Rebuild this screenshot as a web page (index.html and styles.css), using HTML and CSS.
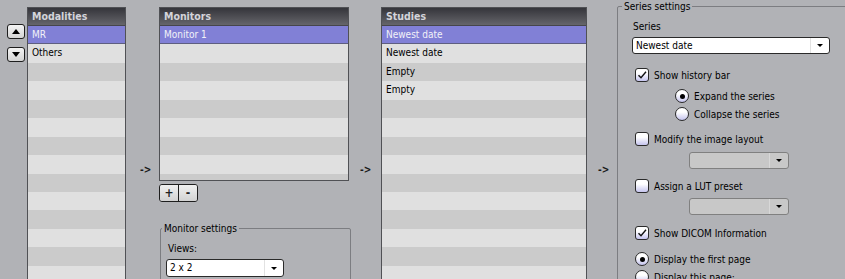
FILE: index.html
```html
<!doctype html>
<html lang="en">
<head>
<meta charset="utf-8">
<title>Hanging protocol</title>
<link rel="stylesheet" href="styles.css">
</head>
<body>
<div id="protocol">

  <div class="order-buttons">
    <button class="order-btn" type="button"><span class="tri-up"></span></button>
    <button class="order-btn" type="button"><span class="tri-down"></span></button>
  </div>

  <div class="list-panel modalities">
    <div class="list-header">Modalities</div>
    <ul class="list-rows">
      <li class="selected">MR</li>
      <li>Others</li>
      <li></li><li></li><li></li><li></li><li></li><li></li>
      <li></li><li></li><li></li><li></li><li></li><li></li>
    </ul>
  </div>

  <div class="arrow arrow-one">-&gt;</div>

  <div class="monitor-column">
    <div class="list-panel monitors">
      <div class="list-header">Monitors</div>
      <ul class="list-rows">
        <li class="selected">Monitor 1</li>
        <li></li><li></li><li></li><li></li><li></li><li></li><li></li><li></li>
      </ul>
    </div>
    <div class="add-remove">
      <button type="button">+</button>
      <button type="button">-</button>
    </div>
    <fieldset class="group monitor-settings">
      <legend>Monitor settings</legend>
      <div class="field-label">Views:</div>
      <div class="combo views-combo">
        <span class="combo-text">2 x 2</span>
        <span class="combo-arrow"><span class="tri-small"></span></span>
      </div>
    </fieldset>
  </div>

  <div class="arrow arrow-two">-&gt;</div>

  <div class="list-panel studies">
    <div class="list-header">Studies</div>
    <ul class="list-rows">
      <li class="selected">Newest date</li>
      <li>Newest date</li>
      <li>Empty</li>
      <li>Empty</li>
      <li></li><li></li><li></li><li></li><li></li><li></li>
      <li></li><li></li><li></li><li></li><li></li>
    </ul>
  </div>

  <div class="arrow arrow-three">-&gt;</div>

  <fieldset class="group series-settings">
    <legend>Series settings</legend>
    <div class="field-label">Series</div>
    <div class="combo series-combo">
      <span class="combo-text">Newest date</span>
      <span class="combo-arrow"><span class="tri-small"></span></span>
    </div>

    <div class="option history-bar">
      <span class="check on"><svg viewBox="0 0 12 12" width="12" height="12"><path d="M2.5 6.2 L5 8.8 L10 2.8" fill="none" stroke="#111" stroke-width="1.4"/></svg></span>
      <span>Show history bar</span>
    </div>
    <div class="option sub expand">
      <span class="radio on"></span>
      <span>Expand the series</span>
    </div>
    <div class="option sub collapse">
      <span class="radio"></span>
      <span>Collapse the series</span>
    </div>

    <div class="option image-layout">
      <span class="check"></span>
      <span>Modify the image layout</span>
    </div>
    <div class="combo disabled layout-combo">
      <span class="combo-text"></span>
      <span class="combo-arrow"><span class="tri-small"></span></span>
    </div>

    <div class="option lut-preset">
      <span class="check"></span>
      <span>Assign a LUT preset</span>
    </div>
    <div class="combo disabled lut-combo">
      <span class="combo-text"></span>
      <span class="combo-arrow"><span class="tri-small"></span></span>
    </div>

    <div class="option dicom-info">
      <span class="check on"><svg viewBox="0 0 12 12" width="12" height="12"><path d="M2.5 6.2 L5 8.8 L10 2.8" fill="none" stroke="#111" stroke-width="1.4"/></svg></span>
      <span>Show DICOM Information</span>
    </div>
    <div class="option first-page">
      <span class="radio on"></span>
      <span>Display the first page</span>
    </div>
    <div class="option this-page">
      <span class="radio"></span>
      <span>Display this page:</span>
    </div>
  </fieldset>

</div>
</body>
</html>
```

FILE: styles.css
```css
body {
  margin: 0;
  height: 279px;
  overflow: hidden;
  background-color: #b1b2b6;
  font-family: Tahoma, "DejaVu Sans Condensed", "Liberation Sans", sans-serif;
  font-size: 10px;
  color: #000;
}

#protocol {
  display: flex;
  align-items: flex-start;
}

/* up / down buttons */
.order-buttons {
  width: 27px;
  padding: 24px 0 0 7px;
  box-sizing: border-box;
  display: flex;
  flex-direction: column;
  gap: 8px;
  flex-shrink: 0;
}
.order-btn {
  width: 18px;
  height: 15px;
  padding: 0;
  border: 1px solid #1e1e1e;
  border-radius: 3px;
  background: linear-gradient(#f4f4f4, #d4d4d4);
  display: flex;
  align-items: center;
  justify-content: center;
}
.tri-up {
  border-left: 4px solid transparent;
  border-right: 4px solid transparent;
  border-bottom: 5px solid #000;
}
.tri-down {
  border-left: 4px solid transparent;
  border-right: 4px solid transparent;
  border-top: 5px solid #000;
}

/* lists */
.list-panel {
  margin-top: 7px;
  border: 1px solid #505155;
  box-sizing: border-box;
  height: 290px;
  overflow: hidden;
  background: #cbcbcb;
  flex-shrink: 0;
}
.modalities { width: 99px; }
.studies { width: 206px; }
.monitors { width: 190px; height: 174px; margin-top: 0; }

.list-header {
  height: 18px;
  box-sizing: border-box;
  line-height: 17px;
  padding-left: 4px;
  font-size: 10.5px;
  font-weight: bold;
  color: #d4d4da;
  background: linear-gradient(#35353b, #65656a);
  border-bottom: 1px solid #46464a;
}
.list-rows {
  list-style: none;
  margin: 0;
  padding: 0;
}
.list-rows li {
  height: 18.45px;
  line-height: 18px;
  box-sizing: border-box;
  padding-left: 4px;
  background: #cbcbcb;
  white-space: nowrap;
}
.list-rows li:nth-child(even) {
  background: #e0e0e0;
}
.list-rows li.selected {
  background: #8180d6;
  color: #f2f2f8;
  border-bottom: 1px solid #5e5e80;
}

/* arrows between columns */
.arrow {
  padding-top: 164px;
  line-height: 12px;
  font-weight: bold;
  font-size: 10px;
  color: #1a1a1a;
  box-sizing: border-box;
  flex-shrink: 0;
}
.arrow-one { width: 33px; padding-left: 14px; }
.arrow-two { width: 32px; padding-left: 11px; }
.arrow-three { width: 30px; padding-left: 11px; }

/* monitors column */
.monitor-column {
  width: 190px;
  margin-top: 7px;
  flex-shrink: 0;
}
.add-remove {
  margin-top: 3px;
  display: flex;
  width: 39px;
  height: 18px;
  border: 1px solid #1e1e1e;
  border-radius: 3px;
  box-sizing: border-box;
  overflow: hidden;
}
.add-remove button {
  flex: 1;
  padding: 0;
  border: 0;
  background: linear-gradient(#f0f0f0, #d2d2d2);
  font-family: inherit;
  font-size: 12px;
  font-weight: bold;
  line-height: 14px;
  color: #222;
}
.add-remove button + button {
  border-left: 1px solid #1e1e1e;
}

/* group boxes */
.group {
  margin: 0;
  border: 1px solid #7c7d81;
  border-radius: 2px;
  box-sizing: border-box;
}
.group legend {
  padding: 0 2px;
  line-height: 13px;
}
.monitor-settings {
  margin: 20px 0 0 1px;
  width: 191px;
  height: 80px;
  padding: 7px 0 0 7px;
}
.monitor-settings legend { margin-left: -6px; }

.series-settings {
  width: 260px;
  height: 300px;
  padding: 7px 0 0 15px;
  flex-shrink: 0;
}
.series-settings legend { margin-left: -11px; }

.field-label {
  line-height: 13px;
}

/* combo boxes */
.combo {
  display: flex;
  height: 17px;
  border: 1px solid #2a2a2a;
  border-radius: 3px;
  background: #fff;
  box-sizing: border-box;
}
.combo-text {
  flex: 1;
  line-height: 15px;
  padding-left: 3px;
  white-space: nowrap;
}
.combo-arrow {
  width: 18px;
  border-left: 1px solid #e2e2e2;
  display: flex;
  align-items: center;
  justify-content: center;
}
.tri-small {
  border-left: 3px solid transparent;
  border-right: 3px solid transparent;
  border-top: 3px solid #000;
}
.combo.disabled {
  background: #c8c8c8;
  border-color: #808080;
}
.combo.disabled .combo-arrow {
  border-left-color: #d8d8d8;
}

.views-combo {
  margin: 4px 0 0 -2px;
  width: 118px;
  height: 18px;
}
.series-combo {
  margin: 4px 0 0 -1px;
  width: 198px;
}
.layout-combo, .lut-combo {
  width: 100px;
  margin-left: 56px;
}
.layout-combo { margin-top: 6px; }
.lut-combo { margin-top: 5px; }

/* check boxes and radios */
.option {
  display: flex;
  align-items: center;
  gap: 5px;
  height: 14px;
  margin-left: 2px;
  white-space: nowrap;
}
.option.sub { margin-left: 42px; }

.check, .radio {
  width: 14px;
  height: 14px;
  box-sizing: border-box;
  border: 1px solid #2a2a2a;
  background: linear-gradient(#ffffff 35%, #c5c4ee);
  display: flex;
  align-items: center;
  justify-content: center;
  flex-shrink: 0;
}
.check { border-radius: 3px; }
.radio { border-radius: 50%; }
.radio.on::after {
  content: "";
  width: 5px;
  height: 5px;
  border-radius: 50%;
  background: #000;
}

.history-bar { margin-top: 14px; }
.expand { margin-top: 7px; }
.collapse { margin-top: 4px; }
.image-layout { margin-top: 11px; }
.lut-preset { margin-top: 10px; }
.dicom-info { margin-top: 11px; }
.first-page { margin-top: 12px; }
.this-page { margin-top: 4px; }
```
